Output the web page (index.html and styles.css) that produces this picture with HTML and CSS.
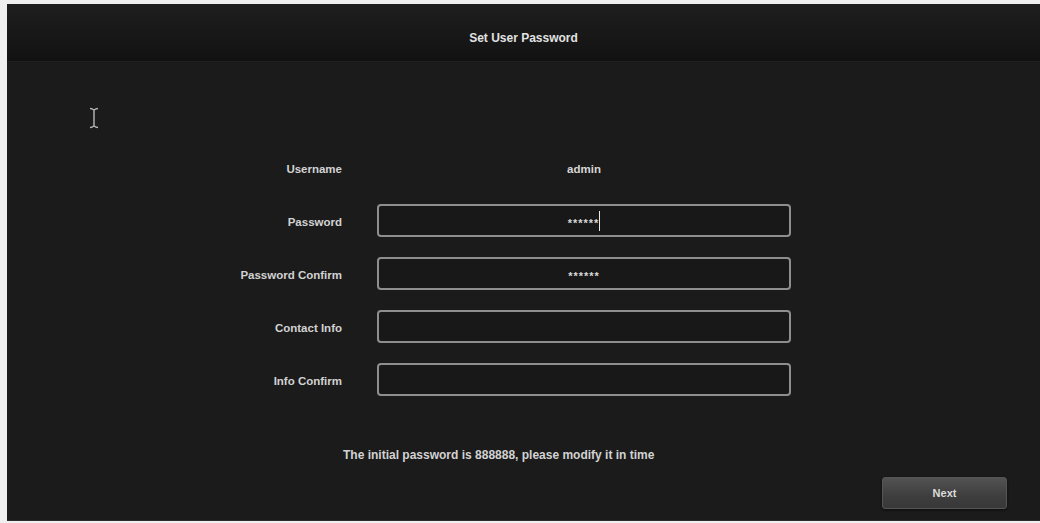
FILE: index.html
```html
<!DOCTYPE html>
<html lang="en">
  <head>
    <meta charset="UTF-8" />
    <meta name="viewport" content="width=device-width, initial-scale=1.0" />
    <title>Set User Password</title>
    <link rel="stylesheet" href="styles.css">
  </head>
  <body>
    <div class="screen">
      <div class="title-bar">Set User Password</div>

      <div class="content">
        <!-- mouse pointer left on screen -->
        <svg class="ibeam" width="10" height="22" viewBox="0 0 10 22">
          <path d="M1 1.5 Q3 1.5 5 3 Q7 1.5 9 1.5 M5 3 V19 M1 20.5 Q3 20.5 5 19 Q7 20.5 9 20.5"
                fill="none" stroke="#b8b8b8" stroke-width="1.4" />
        </svg>

        <form class="pwd-form" id="pwd-form">
          <div class="label">Username</div>
          <div class="value">admin</div>

          <label class="label" for="pwd">Password</label>
          <div class="field">
            <span class="mask">******</span><span class="caret"></span>
          </div>

          <label class="label" for="pwd2">Password Confirm</label>
          <div class="field">
            <span class="mask">******</span>
          </div>

          <label class="label">Contact Info</label>
          <div class="field"></div>

          <label class="label">Info Confirm</label>
          <div class="field"></div>
        </form>

        <div class="hint">The initial password is 888888, please modify it in time</div>

        <div class="actions">
          <button type="button" class="next-btn">Next</button>
        </div>
      </div>
    </div>
  </body>
</html>
```

FILE: styles.css
```css
html,
body {
  margin: 0;
  padding: 0;
}

body {
  font-family: "Liberation Sans", Arial, sans-serif;
  background-color: #efefef;
  width: 1040px;
  height: 523px;
  overflow: hidden;
}

.screen {
  margin: 4px 0 0 7px;
  height: 516px;
  background-color: #1b1b1b;
  border-bottom: 1px solid #2c2c2c;
  display: flex;
  flex-direction: column;
}

.title-bar {
  height: 58px;
  display: flex;
  justify-content: center;
  align-items: center;
  padding-top: 10px;
  color: #e2e2e2;
  font-size: 12px;
  font-weight: bold;
  background: linear-gradient(#1e1e1e, #161616 70%, #111111);
  border-bottom: 1px solid #202020;
  box-sizing: border-box;
}

.content {
  display: flex;
  flex-direction: column;
}

.ibeam {
  display: block;
  margin: 45px 0 0 82px;
}

.pwd-form {
  display: grid;
  grid-template-columns: 335px 414px;
  grid-auto-rows: 33px;
  column-gap: 35px;
  row-gap: 20px;
  margin-top: 22px;
}

.label {
  display: flex;
  align-items: center;
  justify-content: flex-end;
  padding-top: 2px;
  color: #d2d2d2;
  font-size: 11.5px;
  font-weight: bold;
}

.value {
  display: flex;
  align-items: center;
  justify-content: center;
  color: #d6d6d6;
  font-size: 11.5px;
  font-weight: bold;
  padding-top: 2px;
}

.field {
  border: 2px solid #8e8e8e;
  border-radius: 4px;
  background-color: #181818;
  display: flex;
  align-items: center;
  justify-content: center;
  box-sizing: border-box;
}

.mask {
  color: #d8d8d8;
  font-size: 11px;
  font-weight: bold;
  letter-spacing: 1px;
  padding-top: 5px;
}

.caret {
  width: 1px;
  height: 20px;
  background-color: #e8e8e8;
}

.hint {
  margin-top: 51px;
  padding-left: 336px;
  line-height: 16px;
  color: #d2d2d2;
  font-size: 12px;
  font-weight: bold;
}

.actions {
  display: flex;
  justify-content: flex-end;
  padding-right: 33px;
  margin-top: 14px;
}

.next-btn {
  width: 125px;
  height: 32px;
  border: 1px solid #555;
  border-radius: 3px;
  background: linear-gradient(#525252, #3e3e3e 60%, #383838);
  color: #dcdcdc;
  font-family: "Liberation Sans", Arial, sans-serif;
  font-size: 11px;
  font-weight: bold;
  cursor: pointer;
  box-shadow: 0 1px 3px rgba(0, 0, 0, 0.6);
}
```
